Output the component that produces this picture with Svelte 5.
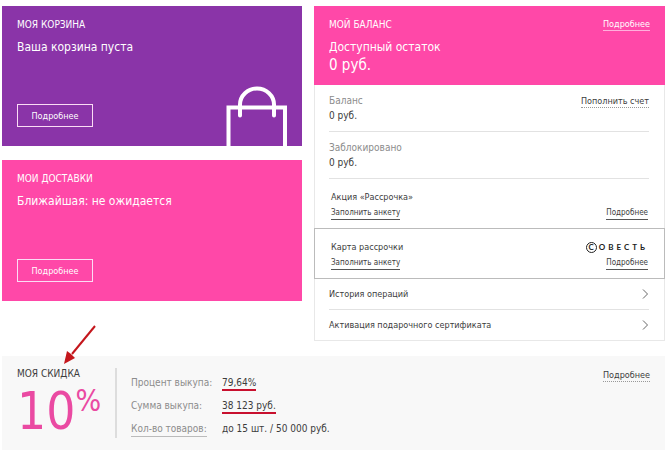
<script lang="ts">
    const discount: { label: string; value: string; marked?: boolean; hint?: boolean }[] = [
        { label: 'Процент выкупа:', value: '79,64%', marked: true },
        { label: 'Сумма выкупа:', value: '38 123 руб.', marked: true },
        { label: 'Кол-во товаров:', value: 'до 15 шт. / 50 000 руб.', hint: true },
    ];

    const menu = ['История операций', 'Активация подарочного сертификата'];
</script>

<main class="page">
    <div class="columns">
        <div class="left">
            <section class="card basket">
                <h2>МОЯ КОРЗИНА</h2>
                <p class="lead">Ваша корзина пуста</p>
                <button type="button">Подробнее</button>
                <svg class="bag" width="62" height="60" viewBox="0 0 62 60" aria-hidden="true">
                    <path d="M2.5 60V21.500H59V60" />
                    <path class="handle" d="M14 29.500V18.500a17 16 0 0 1 34 0V29.500" />
                </svg>
            </section>

            <section class="card delivery">
                <h2>МОИ ДОСТАВКИ</h2>
                <p class="lead">Ближайшая: не ожидается</p>
                <button type="button">Подробнее</button>
            </section>
        </div>

        <section class="balance">
            <header>
                <div class="line">
                    <h2>МОЙ БАЛАНС</h2>
                    <a class="more" href="#balance">Подробнее</a>
                </div>
                <p class="lead">Доступный остаток</p>
                <p class="total">0 руб.</p>
            </header>

            <div class="row">
                <div>
                    <p class="name">Баланс</p>
                    <p>0 руб.</p>
                </div>
                <a class="more dotted" href="#refill">Пополнить счет</a>
            </div>
            <div class="row">
                <div>
                    <p class="name">Заблокировано</p>
                    <p>0 руб.</p>
                </div>
            </div>

            <div class="offer">
                <div class="line">
                    <p>Акция «Рассрочка»</p>
                </div>
                <div class="line small">
                    <a href="#form">Заполнить анкету</a>
                    <a href="#promo">Подробнее</a>
                </div>
            </div>
            <div class="offer framed">
                <div class="line">
                    <p>Карта рассрочки</p>
                    <span class="brand"><span class="mark">С</span>ОВЕСТЬ</span>
                </div>
                <div class="line small">
                    <a href="#card-form">Заполнить анкету</a>
                    <a href="#card">Подробнее</a>
                </div>
            </div>

            <nav>
                {#each menu as item}
                    <a href="#menu">
                        {item}
                        <svg width="7" height="10" viewBox="0 0 7 10" aria-hidden="true">
                            <path d="M1 .5 5.500 5 1 9.500" />
                        </svg>
                    </a>
                {/each}
            </nav>
        </section>
    </div>

    <section class="discount">
        <div class="percent">
            <h2>МОЯ СКИДКА</h2>
            <p class="big">10<span>%</span></p>
            <svg class="arrow" width="34" height="42" viewBox="0 0 34 42" aria-hidden="true">
                <path class="shaft" d="M32 2 9 30" />
                <path class="head" d="M1 40 4 27 8 30 12 34Z" />
            </svg>
        </div>
        <dl>
            {#each discount as row}
                <div>
                    <dt><span class:hint={row.hint}>{row.label}</span></dt>
                    <dd><span class:marked={row.marked}>{row.value}</span></dd>
                </div>
            {/each}
        </dl>
        <a class="more dotted" href="#discount">Подробнее</a>
    </section>
</main>

<style>
    :global(body) {
        margin: 0;
        background: #fff;
    }

    .page {
        padding: 6px 5px 0 2px;
        font-family: "DejaVu Sans Condensed", "Noto Sans", sans-serif;
        font-size: 10px;
        line-height: 15px;
        color: #3c3c3c;
    }

    h2, p, dl, dd {
        margin: 0;
    }

    h2 {
        font-size: 10px;
        line-height: 15px;
        font-weight: normal;
    }

    a {
        color: inherit;
        text-decoration: none;
    }

    .columns {
        display: grid;
        grid-template-columns: 300fr 351fr;
        gap: 12px;
        align-items: start;
    }

    .left {
        display: grid;
        gap: 14px;
    }

    .card {
        position: relative;
        display: flex;
        flex-direction: column;
        align-items: flex-start;
        min-height: 140px;
        padding: 11px 15px 19px;
        box-sizing: border-box;
        color: #fff;
    }

    .basket {
        background: #8a34a8;
    }

    .delivery {
        min-height: 141px;
        background: #ff48a8;
    }

    .lead {
        margin-top: 6px;
        font-size: 12px;
        line-height: 18px;
    }

    .card button {
        width: 76px;
        height: 23px;
        margin-top: auto;
        padding: 0;
        border: 1px solid #fbdcf5;
        background: none;
        color: #fff;
        font-family: inherit;
        font-size: 9px;
        cursor: pointer;
    }

    .bag {
        position: absolute;
        right: 14px;
        bottom: 0;
        fill: none;
        stroke: #fff;
        stroke-width: 4;
    }

    .bag .handle {
        stroke-linecap: round;
    }

    .balance {
        border: 1px solid #e8e8e8;
        border-top: 0;
    }

    .balance header {
        margin: 0 -1px;
        padding: 11px 15px 10px;
        background: #ff48a8;
        color: #fff;
    }

    .line {
        display: flex;
        justify-content: space-between;
        align-items: center;
    }

    .total {
        font-size: 15px;
        line-height: 19px;
    }

    .more {
        font-size: 9px;
        line-height: 12px;
        border-bottom: 1px solid #ffb0dc;
    }

    .dotted {
        border-bottom: 1px dotted #999;
    }

    .row {
        display: flex;
        justify-content: space-between;
        align-items: flex-start;
        margin: 0 15px 0 14px;
        padding: 8px 0;
        border-bottom: 1px solid #e2e2e2;
    }

    .row .more {
        margin-top: 2px;
    }

    .name {
        color: #8c8c8c;
    }

    .offer {
        padding: 11px 16px 8px;
        font-size: 9px;
    }

    .framed {
        margin: 0 -1px;
        border: 1px solid #bbb;
    }

    .small {
        margin-top: 2px;
        font-size: 8px;
    }

    .small a {
        line-height: 12px;
        border-bottom: 1px solid #555;
    }

    .brand {
        display: flex;
        align-items: center;
        font-family: Lato, sans-serif;
        font-size: 8px;
        font-weight: bold;
        letter-spacing: 3px;
        color: #222;
    }

    .mark {
        display: grid;
        place-items: center;
        width: 9px;
        height: 9px;
        margin-right: 2px;
        border: 1px solid #222;
        border-radius: 50%;
        line-height: 9px;
        letter-spacing: 0;
    }

    nav {
        padding: 0 15px 0 14px;
        font-size: 9px;
    }

    nav a {
        display: flex;
        justify-content: space-between;
        align-items: center;
        height: 30px;
    }

    nav a + a {
        border-top: 1px solid #e2e2e2;
    }

    nav svg {
        fill: none;
        stroke: #666;
    }

    .discount {
        display: flex;
        align-items: flex-start;
        margin-top: 15px;
        padding: 12px 15px;
        background: #f8f8f8;
    }

    .discount .more {
        margin-top: 1px;
    }

    .percent {
        position: relative;
        flex: none;
        width: 98px;
        height: 70px;
        border-right: 2px solid #ddd;
    }

    .percent h2 {
        line-height: 12px;
    }

    .big {
        display: flex;
        font-size: 51px;
        line-height: 64px;
        color: #ea4aa2;
    }

    .big span {
        font-size: 30px;
        line-height: 42px;
    }

    /* points from above the panel down to its title */
    .arrow {
        position: absolute;
        left: 46px;
        top: -44px;
    }

    .shaft {
        stroke: #c4161c;
        stroke-width: 2;
    }

    .head {
        fill: #c4161c;
    }

    dl {
        flex: 1;
        display: grid;
        gap: 8px;
        margin-left: 14px;
        padding-top: 7px;
    }

    dl div {
        display: grid;
        grid-template-columns: 91px 1fr;
    }

    dt {
        color: #8c8c8c;
    }

    .hint {
        padding-bottom: 2px;
        border-bottom: 1px solid #bbb;
    }

    .marked {
        padding-bottom: 1px;
        border-bottom: 2px solid #c8102e;
    }
</style>
